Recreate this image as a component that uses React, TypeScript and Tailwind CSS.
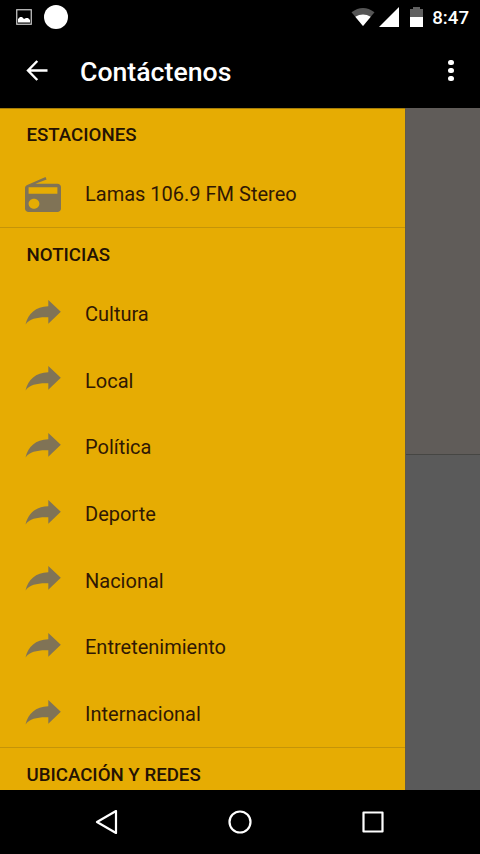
import React from "react";

const news = ["Cultura", "Local", "Política", "Deporte", "Nacional", "Entretenimiento", "Internacional"];

function RadioIcon() {
  return (
    <svg className="h-[35px] w-[36px] shrink-0" viewBox="2 1 20 21" preserveAspectRatio="none" fill="#807356">
      <path d="M3.24 5.75C2.51 6.1 2 6.8 2 7.6V20c0 1.1.89 2 2 2h16c1.11 0 2-.9 2-2V7c0-1.11-.89-2-2-2H7.8l6.2-2.5L13.4 1 3.24 5.75zM7 20c-1.66 0-3-1.34-3-3s1.34-3 3-3 3 1.34 3 3-1.34 3-3 3zm13-8.9H4V7.2h16v3.9z" />
    </svg>
  );
}

function ForwardIcon() {
  return (
    <svg className="-mt-[5px] h-[25px] w-[36px] shrink-0" viewBox="0 0 36 25" fill="#807356">
      <path d="M23.3 0 35.8 11.8 23.3 23.8V17.3C13.5 16.8 5 18.5 0.5 24.4 3.2 13.5 10.5 6.6 23.3 6.2Z" />
    </svg>
  );
}

function Heading({ children }: { children: React.ReactNode }) {
  return (
    <h2 className="flex h-[53.33px] shrink-0 items-center pl-[26.5px] pt-px text-[18.67px] font-medium text-[#241204]">
      {children}
    </h2>
  );
}

function Row({ icon, label }: { icon: React.ReactNode; label: string }) {
  return (
    <li className="flex h-[66.67px] shrink-0 items-center pl-[25px]">
      {icon}
      <span className="mb-px ml-6 text-[20px] leading-6 text-[#301804]">{label}</span>
    </li>
  );
}

export default function App() {
  return (
    <div className="flex h-[854px] w-[480px] flex-col overflow-hidden bg-black font-[Roboto,sans-serif] text-white">
      <div className="flex h-[33px] shrink-0 items-center justify-between pl-4 pr-[11px]">
        <div className="flex items-center gap-3">
          <svg className="size-4" viewBox="0 0 16 16">
            <rect x=".75" y=".75" width="14.5" height="14.5" fill="none" stroke="#d0d0d0" strokeWidth="1.2" />
            <path d="M2 13.5V10l2-2h2l2 2 2-1h2l2 2v2.5z" fill="#fff" />
          </svg>
          <div className="size-6 rounded-full bg-white" />
        </div>
        <div className="flex items-center">
          <svg className="h-5 w-6" viewBox="0 0 24 20">
            <path d="M.5 5.3Q12-3.3 23.5 5.3L12 19z" fill="#555" />
            <path d="M4.3 9.8Q12 5 19.7 9.8L12 19z" fill="#fff" />
          </svg>
          <svg className="ml-1 h-5 w-5" viewBox="0 0 20 20">
            <path d="M20 0v20H0z" fill="#fff" />
          </svg>
          <svg className="ml-[11px] h-5 w-[13px]" viewBox="0 0 13 20">
            <path d="M0 2h3V0h7v2h3v8H0z" fill="#606060" />
            <path d="M0 10h13v10H0z" fill="#fff" />
          </svg>
          <span className="ml-[9px] mt-[2px] text-[18.67px] font-medium leading-5">8:47</span>
        </div>
      </div>

      <header className="flex h-[75px] shrink-0 items-center pl-[26px] pr-[26.5px]">
        <svg className="-mt-px h-[21px] w-[22px]" viewBox="0 0 22 21" fill="none" stroke="#fff" strokeWidth="2.4">
          <path d="M11.3 1 2 10.5l9.3 9.5M2 10.5h19.5" />
        </svg>
        <h1 className="ml-8 mt-[3px] text-[26.67px] font-medium leading-8">Contáctenos</h1>
        <div className="ml-auto flex flex-col gap-[2.5px]">
          <div className="size-[5.5px] rounded-full bg-white" />
          <div className="size-[5.5px] rounded-full bg-white" />
          <div className="size-[5.5px] rounded-full bg-white" />
        </div>
      </header>

      <main className="flex h-[682px] shrink-0 overflow-hidden">
        <nav className="flex w-[405px] shrink-0 flex-col overflow-hidden bg-[#e6ac03] shadow-[inset_0_1px_0_#a77e08]">
          <Heading>ESTACIONES</Heading>
          <ul className="h-[66.67px] shrink-0 border-b border-[#c59408]">
            <Row icon={<RadioIcon />} label="Lamas 106.9 FM Stereo" />
          </ul>
          <Heading>NOTICIAS</Heading>
          <ul className="h-[466.67px] shrink-0 border-b border-[#c59408]">
            {news.map((label) => (
              <Row key={label} icon={<ForwardIcon />} label={label} />
            ))}
          </ul>
          <Heading>UBICACIÓN Y REDES</Heading>
        </nav>
        <div className="flex flex-1 flex-col border-l border-[#625a48]">
          <div className="h-[347px] border-b border-[#464643] bg-[#605c59]" />
          <div className="flex-1 bg-[#5a5a5a]" />
        </div>
      </main>

      <footer className="flex h-16 shrink-0 items-center justify-between pl-[95px] pr-[95px]">
        <svg className="h-6 w-6" viewBox="0 0 24 24" fill="none" stroke="#fff" strokeWidth="2.2" strokeLinejoin="round">
          <path d="M21 1v22L2 12z" />
        </svg>
        <svg className="h-6 w-6" viewBox="0 0 24 24" fill="none" stroke="#fff" strokeWidth="2.2">
          <circle cx="12" cy="12" r="10.5" />
        </svg>
        <svg className="h-6 w-6" viewBox="0 0 24 24" fill="none" stroke="#fff" strokeWidth="2.2" strokeLinejoin="round">
          <rect x="2.5" y="2.5" width="19" height="19" />
        </svg>
      </footer>
    </div>
  );
}
